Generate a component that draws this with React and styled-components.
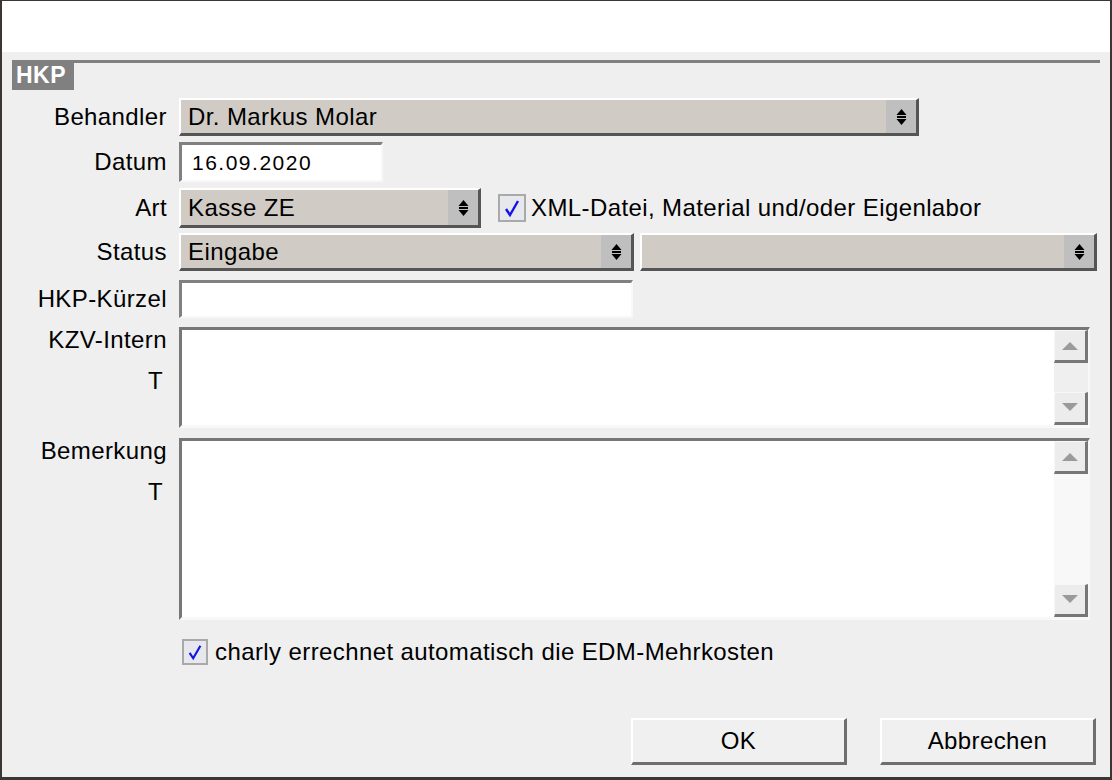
import React from "react";
import styled, { createGlobalStyle } from "styled-components";

const Global = createGlobalStyle`
  html, body { margin: 0; padding: 0; background: #ffffff; }
  body { font-family: "Liberation Sans", Arial, sans-serif; }
  * { box-sizing: border-box; }
`;

const Window = styled.div`
  width: 1112px;
  height: 780px;
  border-style: solid;
  border-color: #3b3631;
  border-width: 1px 2px 3px 2px;
  display: flex;
  flex-direction: column;
  background: #efefef;
  font-family: "Liberation Sans", Arial, sans-serif;
  font-size: 24px;
  letter-spacing: 0.4px;
  color: #000;
`;

const TitleArea = styled.div`
  height: 51px;
  background: #ffffff;
  flex: none;
`;

const Body = styled.div`
  flex: 1;
  display: flex;
  flex-direction: column;
  padding: 8px 14px 12px 0;
`;

const SectionHeader = styled.div`
  display: flex;
  align-items: flex-start;
  margin: 0 -4px 0 10px;
`;

const SectionTitle = styled.div`
  background: #808080;
  color: #ffffff;
  font-weight: bold;
  font-size: 23px;
  letter-spacing: 0.5px;
  height: 30px;
  width: 62px;
  padding: 0 0 0 4px;
  line-height: 31px;
`;

const SectionLine = styled.div`
  flex: 1;
  height: 3px;
  background: #808080;
`;

const Row = styled.div`
  display: grid;
  grid-template-columns: 165px 1fr;
  column-gap: 12px;
  margin-top: ${(p) => p.$top}px;
  align-items: ${(p) => (p.$topAlign ? "start" : "center")};
`;

const Label = styled.div`
  text-align: right;
  white-space: nowrap;
  line-height: 26px;
`;

const LabelSub = styled.div`
  text-align: right;
  margin-top: 15px;
  padding-right: 4px;
  line-height: 26px;
`;

const FieldLine = styled.div`
  display: flex;
  align-items: center;
  gap: ${(p) => p.$gap || 0}px;
`;

const SelectBox = styled.div`
  width: ${(p) => p.$w}px;
  height: ${(p) => p.$h || 38}px;
  display: flex;
  background: #d0ccc5;
  border-style: solid;
  border-width: 2px 3px 3px 2px;
  border-color: #ffffff #555555 #555555 #ffffff;
`;

const SelectText = styled.div`
  flex: 1;
  padding-left: 7px;
  display: flex;
  align-items: center;
  white-space: nowrap;
`;

const SelectArrow = styled.div`
  width: 30px;
  background: #bfbfbf;
  display: flex;
  align-items: center;
  justify-content: center;
`;

const Input = styled.div`
  width: ${(p) => p.$w}px;
  height: ${(p) => p.$h}px;
  background: #ffffff;
  border-style: solid;
  border-width: 3px 2px 2px 3px;
  border-color: #808080 #f8f8f8 #f8f8f8 #808080;
  display: flex;
  align-items: center;
  padding-left: 10px;
`;

const DateText = styled.span`
  font-size: 21px;
  letter-spacing: 1.5px;
`;

const CheckBox = styled.div`
  width: ${(p) => p.$s}px;
  height: ${(p) => p.$s}px;
  border: 2px solid #a9a9a9;
  background: #e6e8ee;
  display: flex;
  align-items: center;
  justify-content: center;
  flex: none;
`;

const CheckLabel = styled.span`
  white-space: nowrap;
`;

const TextBox = styled.div`
  width: 911px;
  height: ${(p) => p.$h}px;
  display: flex;
  background: #ffffff;
  border-style: solid;
  border-width: 3px 2px 3px 3px;
  border-color: #777777 #f8f8f8 #f8f8f8 #777777;
`;

const TextArea = styled.div`
  flex: 1;
`;

const ScrollBar = styled.div`
  width: 34px;
  display: flex;
  flex-direction: column;
  background: ${(p) => p.$track};
`;

const ScrollBtn = styled.div`
  height: 33px;
  background: #ececec;
  border-style: solid;
  border-width: 1px 3px 3px 1px;
  border-color: #f8f8f8 #777777 #777777 #f8f8f8;
  display: flex;
  align-items: center;
  justify-content: center;
`;

const Track = styled.div`
  flex: 1;
`;

const CheckRow = styled.div`
  display: flex;
  align-items: center;
  gap: 7px;
  margin-top: 18px;
  margin-left: 180px;
`;

const ButtonBar = styled.div`
  margin-top: auto;
  display: flex;
  justify-content: flex-end;
  gap: 33px;
`;

const Button = styled.div`
  width: 216px;
  height: 47px;
  background: #f0f0f0;
  border-style: solid;
  border-width: 2px 3px 3px 2px;
  border-color: #ffffff #6e6e6e #6e6e6e #ffffff;
  display: flex;
  align-items: center;
  justify-content: center;
`;

const UpDown = () => (
  <svg width="11" height="18" viewBox="0 0 11 18">
    <polygon points="0.5,7 5.5,1 10.5,7" fill="#000" />
    <rect x="1" y="8" width="9" height="2" fill="#000" />
    <polygon points="0.5,11 5.5,17 10.5,11" fill="#000" />
  </svg>
);

const Check = ({ size }) => (
  <svg width={size} height={size} viewBox="0 0 20 20">
    <path d="M4 11 L8 17 L16 3" fill="none" stroke="#1414e6" strokeWidth="2.4" />
  </svg>
);

const Tri = ({ down }) => (
  <svg width="16" height="9" viewBox="0 0 16 9">
    <polygon points={down ? "0,0 16,0 8,8" : "0,9 16,9 8,1"} fill="#9a9a9a" />
  </svg>
);

const Select = ({ w, h, children }) => (
  <SelectBox $w={w} $h={h}>
    <SelectText>{children}</SelectText>
    <SelectArrow>
      <UpDown />
    </SelectArrow>
  </SelectBox>
);

const MultiLine = ({ h, track }) => (
  <TextBox $h={h}>
    <TextArea />
    <ScrollBar $track={track}>
      <ScrollBtn>
        <Tri />
      </ScrollBtn>
      <Track />
      <ScrollBtn>
        <Tri down />
      </ScrollBtn>
    </ScrollBar>
  </TextBox>
);

export default function App() {
  return (
    <>
      <Global />
      <Window>
        <TitleArea />
        <Body>
          <SectionHeader>
            <SectionTitle>HKP</SectionTitle>
            <SectionLine />
          </SectionHeader>

          <Row $top={8}>
            <Label>Behandler</Label>
            <Select w={740} h={38}>Dr. Markus Molar</Select>
          </Row>

          <Row $top={6}>
            <Label>Datum</Label>
            <Input $w={204} $h={40}>
              <DateText>16.09.2020</DateText>
            </Input>
          </Row>

          <Row $top={6}>
            <Label>Art</Label>
            <FieldLine $gap={17}>
              <Select w={302} h={40}>Kasse ZE</Select>
              <FieldLine $gap={5}>
                <CheckBox $s={28}>
                  <Check size={20} />
                </CheckBox>
                <CheckLabel>XML-Datei, Material und/oder Eigenlabor</CheckLabel>
              </FieldLine>
            </FieldLine>
          </Row>

          <Row $top={5}>
            <Label>Status</Label>
            <FieldLine $gap={6}>
              <Select w={455} h={38}>Eingabe</Select>
              <Select w={457} h={38}></Select>
            </FieldLine>
          </Row>

          <Row $top={9}>
            <Label>HKP-Kürzel</Label>
            <Input $w={454} $h={38} />
          </Row>

          <Row $top={9} $topAlign>
            <div>
              <Label>KZV-Intern</Label>
              <LabelSub>T</LabelSub>
            </div>
            <MultiLine h={101} track="#efefef" />
          </Row>

          <Row $top={10} $topAlign>
            <div>
              <Label>Bemerkung</Label>
              <LabelSub>T</LabelSub>
            </div>
            <MultiLine h={182} track="#f8f8f8" />
          </Row>

          <CheckRow>
            <CheckBox $s={26}>
              <Check size={18} />
            </CheckBox>
            <CheckLabel>charly errechnet automatisch die EDM-Mehrkosten</CheckLabel>
          </CheckRow>

          <ButtonBar>
            <Button>OK</Button>
            <Button>Abbrechen</Button>
          </ButtonBar>
        </Body>
      </Window>
    </>
  );
}
